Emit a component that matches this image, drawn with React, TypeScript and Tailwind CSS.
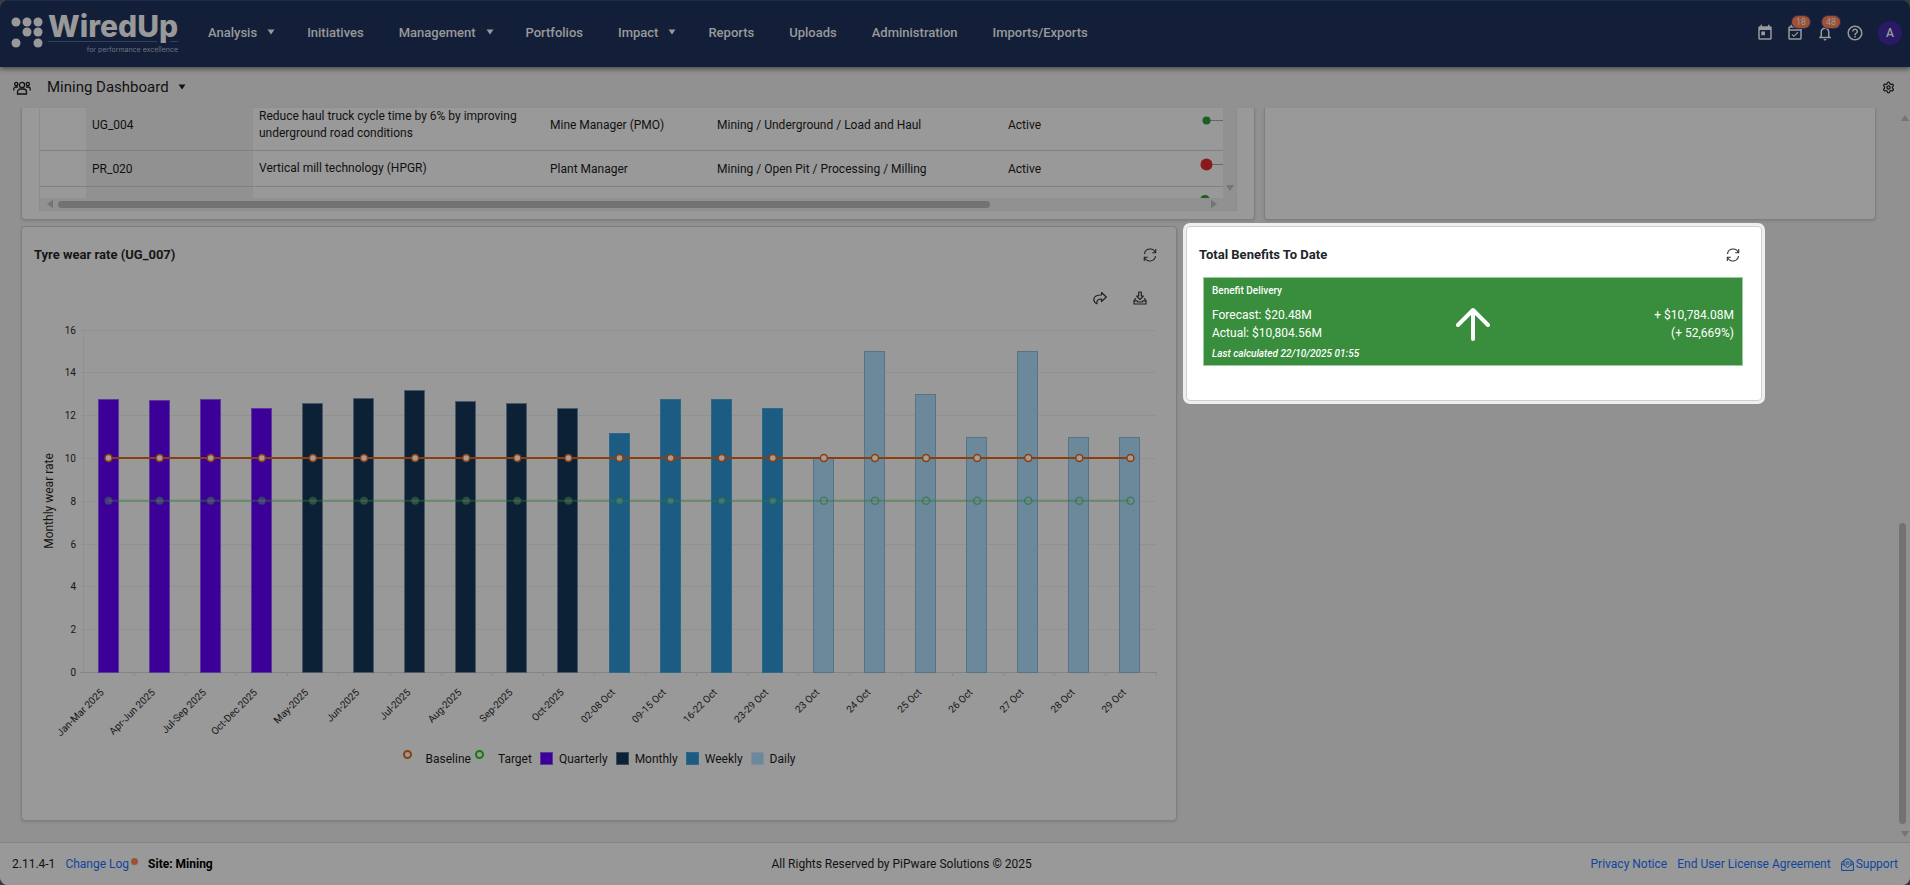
import React from 'react';
import { Settings } from 'lucide-react';
import {
  MdToday, MdOutlineEventAvailable, MdNotificationsNone, MdHelpOutline
} from 'react-icons/md';

const menuItems = [
  { name: 'Analysis', dropdown: true },
  { name: 'Initiatives' },
  { name: 'Management', dropdown: true },
  { name: 'Portfolios' },
  { name: 'Impact', dropdown: true },
  { name: 'Reports' },
  { name: 'Uploads' },
  { name: 'Administration' },
  { name: 'Imports/Exports' }
];

const initiatives = [
  {
    code: 'UG_004',
    name: 'Reduce haul truck cycle time by 6% by improving underground road conditions',
    owner: 'Mine Manager (PMO)',
    location: 'Mining / Underground / Load and Haul',
    status: 'Active',
    dot: '#1d5e21',
    radius: 4
  },
  {
    code: 'PR_020',
    name: 'Vertical mill technology (HPGR)',
    owner: 'Plant Manager',
    location: 'Mining / Open Pit / Processing / Milling',
    status: 'Active',
    dot: '#8a1a1a',
    radius: 6
  }
];

const series = {
  quarterly: '#3c0099',
  monthly: '#0c2136',
  weekly: '#1c5c82',
  daily: '#6c899c'
};

const borders = {
  quarterly: '#5c3a9a',
  monthly: '#4a5a68',
  weekly: '#2f6788',
  daily: '#567486'
};

type Kind = keyof typeof series;

const wearRates: { label: string; value: number; kind: Kind }[] = [
  { label: 'Jan-Mar 2025', value: 12.78, kind: 'quarterly' },
  { label: 'Apr-Jun 2025', value: 12.7, kind: 'quarterly' },
  { label: 'Jul-Sep 2025', value: 12.78, kind: 'quarterly' },
  { label: 'Oct-Dec 2025', value: 12.35, kind: 'quarterly' },
  { label: 'May-2025', value: 12.58, kind: 'monthly' },
  { label: 'Jun-2025', value: 12.82, kind: 'monthly' },
  { label: 'Jul-2025', value: 13.17, kind: 'monthly' },
  { label: 'Aug-2025', value: 12.66, kind: 'monthly' },
  { label: 'Sep-2025', value: 12.56, kind: 'monthly' },
  { label: 'Oct-2025', value: 12.35, kind: 'monthly' },
  { label: '02-08 Oct', value: 11.18, kind: 'weekly' },
  { label: '09-15 Oct', value: 12.74, kind: 'weekly' },
  { label: '16-22 Oct', value: 12.74, kind: 'weekly' },
  { label: '23-29 Oct', value: 12.32, kind: 'weekly' },
  { label: '23 Oct', value: 10, kind: 'daily' },
  { label: '24 Oct', value: 15, kind: 'daily' },
  { label: '25 Oct', value: 13, kind: 'daily' },
  { label: '26 Oct', value: 11, kind: 'daily' },
  { label: '27 Oct', value: 15, kind: 'daily' },
  { label: '28 Oct', value: 11, kind: 'daily' },
  { label: '29 Oct', value: 11, kind: 'daily' }
];

const Caret = ({ className }: { className: string }) => (
  <svg viewBox="0 0 10 10" className={className} fill="currentColor" aria-hidden="true">
    <path d="M1.5 2.500h7L5 7.500z" />
  </svg>
);

const RefreshIcon = () => (
  <svg viewBox="0 0 14 14" className="size-[14px]" fill="none" stroke="currentColor" strokeWidth="1.1" aria-hidden="true">
    <path d="M1.5 6A5.600 5.600 0 0 1 12.300 4.600M12.500 8A5.600 5.600 0 0 1 1.700 9.400" />
    <path d="M12.700 1v3.800H9.200M1.300 13V9.200h3.500" />
  </svg>
);

const Logo = () => (
  <svg viewBox="0 0 170 44" className="h-[44px] w-[170px] overflow-visible" fill="#999" role="img" aria-label="WiredUp for performance excellence">
    {[[5, 11], [16, 11], [27, 11], [16, 21], [27, 21], [5, 32], [27, 32]].map(([x, y]) => (
      <circle key={`${x}-${y}`} cx={x} cy={y} r="4.500" />
    ))}
    <text x="37" y="26" fontFamily="Inter, sans-serif" fontWeight="800" fontSize="30">WiredUp</text>
    <path d="M37 30.500h109M159 30.500h8" stroke="#33425c" strokeWidth="1" />
    <text x="167" y="41" textAnchor="end" fontFamily="Inter, sans-serif" fontSize="7" fill="#6d7482">for performance excellence</text>
  </svg>
);

const WearRateChart = () => {
  const left = 61;
  const right = 1134;
  const bottom = 359;
  const unit = 21.4;
  const step = (right - left) / wearRates.length;
  const y = (value: number) => bottom - value * unit;
  const x = (index: number) => left + step * (index + 0.5);

  return (
    <svg viewBox="0 0 1154 430" className="w-full" fontFamily="Roboto, sans-serif" role="img" aria-label="Monthly wear rate">
      {[0, 2, 4, 6, 8, 10, 12, 14, 16].map((tick) => (
        <g key={tick}>
          <path d={`M${left - 3} ${Math.round(y(tick)) + 0.5}H${right}`} stroke={tick === 0 ? '#848484' : '#919191'} />
          <text x={left - 7} y={Math.round(y(tick)) + 4} textAnchor="end" fontSize="10" fill="#161616">{tick}</text>
        </g>
      ))}
      <path d={`M${left + 0.5} ${y(16)}V${bottom + 3}`} stroke="#919191" />
      <text transform="translate(31 188) rotate(-90)" textAnchor="middle" fontSize="12" fill="#161616">Monthly wear rate</text>

      {wearRates.map((rate, index) => (
        <g key={`${rate.kind}-${rate.label}`}>
          <rect
            x={Math.round(x(index) - 10) - 0.5}
            y={Math.round(y(rate.value)) + 0.5}
            width="20"
            height={bottom - Math.round(y(rate.value))}
            fill={series[rate.kind]}
            stroke={borders[rate.kind]}
          />
          <path d={`M${Math.round(left + step * (index + 1)) + 0.5} ${bottom}v4`} stroke="#8a8a8a" />
          <text
            transform={`translate(${x(index) - 4} 380) rotate(-45)`}
            textAnchor="end"
            fontSize="10"
            fill="#161616"
          >
            {rate.label}
          </text>
        </g>
      ))}

      {/* Baseline and target */}
      <path d={`M${x(0)} ${y(10)}H${x(20)}`} stroke="#8b3f0f" strokeWidth="2" />
      <path d={`M${x(0)} ${y(8)}H${x(20)}`} stroke="#2f7a35" strokeOpacity="0.45" strokeWidth="2" />
      {wearRates.map((rate, index) => (
        <g key={`marker-${rate.kind}-${rate.label}`}>
          <circle cx={x(index)} cy={y(10)} r="3.500" fill="#a59c96" stroke="#8b3f0f" strokeWidth="1.500" />
          <circle
            cx={x(index)}
            cy={y(8)}
            r="3.500"
            fill="#999"
            fillOpacity={rate.kind === 'daily' ? 0.15 : 0.3}
            stroke="#1b6b28"
            strokeOpacity="0.5"
            strokeWidth="1.500"
          />
        </g>
      ))}
    </svg>
  );
};

const App = () => {
  return (
    <div className="h-screen bg-[#3a3a3c] font-[Roboto,sans-serif] text-xs text-[#111]">
      <div className="flex h-full flex-col overflow-hidden rounded-lg bg-[#919191]">
        {/* Top navigation */}
        <header className="z-10 flex h-[67px] shrink-0 items-center border-t border-[#1c2d4c] bg-[#131f38] pr-2 pb-[3px] pl-[11px] text-[#999] shadow-[0_2px_5px_rgba(0,0,0,0.5)]">
          <Logo />
          <nav className="ml-[27px] flex items-center gap-[35px] text-[13px] font-medium">
            {menuItems.map((item) => (
              <a key={item.name} href="#" className="flex items-center">
                {item.name}
                {item.dropdown && <Caret className="-mr-1 ml-[9px] size-[10px]" />}
              </a>
            ))}
          </nav>
          <div className="ml-auto flex items-center gap-3">
            <button aria-label="Calendar"><MdToday className="size-[18px]" /></button>
            <button aria-label="Tasks" className="relative">
              <MdOutlineEventAvailable className="size-[18px]" />
              <span className="absolute -top-2 left-1.5 h-3 w-[18px] rounded-full bg-[#9e5235] text-center text-[9px] leading-3 ring-1 ring-[#3a2a5a]">18</span>
            </button>
            <button aria-label="Notifications" className="relative">
              <MdNotificationsNone className="size-[18px]" />
              <span className="absolute -top-2 left-1.5 h-3 w-[18px] rounded-full bg-[#9e5235] text-center text-[9px] leading-3 ring-1 ring-[#3a2a5a]">48</span>
            </button>
            <button aria-label="Help"><MdHelpOutline className="size-[18px]" /></button>
            <button className="ml-0.5 size-6 rounded-full bg-[#2a1a66] text-xs font-medium">A</button>
          </div>
        </header>

        {/* Dashboard title bar */}
        <div className="flex h-[41px] shrink-0 items-center pr-[15px] pl-[13px]">
          <svg viewBox="0 0 18 14" className="h-[14px] w-[18px]" fill="none" stroke="currentColor" strokeWidth="1.300" aria-hidden="true">
            <circle cx="9" cy="4" r="2.600" />
            <circle cx="3.200" cy="3" r="1.600" />
            <circle cx="14.800" cy="3" r="1.600" />
            <path d="M4.500 13V11a3 3 0 0 1 3-3h3a3 3 0 0 1 3 3v2zM.8 9.500V8a2 2 0 0 1 2-2H5M17.200 9.500V8a2 2 0 0 0-2-2H13" />
          </svg>
          <button className="ml-4 flex items-center text-[15px]">
            Mining Dashboard
            <Caret className="ml-2 size-[10px]" />
          </button>
          <button aria-label="Settings" className="ml-auto">
            <Settings className="size-[13px]" strokeWidth={2.2} />
          </button>
        </div>

        <main className="flex min-h-0 flex-1">
          <div className="flex min-w-0 flex-1 flex-col gap-1.5 pr-[23px] pl-[21px]">
            <div className="grid grid-cols-[1234fr_612fr] gap-[9px]">
              {/* Initiatives table */}
              <section className="rounded-b border border-t-0 border-[#7f7f7f] bg-[#999] px-[17px] pb-2 shadow-sm">
                <div className="flex border-x border-[#8d8d8d]">
                  <div className="h-[90px] min-w-0 flex-1 overflow-hidden">
                    <table className="-mt-2 w-full table-fixed">
                      <colgroup>
                        <col className="w-[46px]" />
                        <col className="w-[167px]" />
                        <col className="w-[291px]" />
                        <col className="w-[167px]" />
                        <col className="w-[291px]" />
                        <col className="w-[190px]" />
                        <col />
                      </colgroup>
                      <tbody>
                        {initiatives.map((row) => (
                          <tr key={row.code} className="border-b border-[#808080]">
                            <td />
                            <td className="bg-[#919191] px-1.5">{row.code}</td>
                            <td className="px-1.5 py-2 leading-[17px]">{row.name}</td>
                            <td className="px-1.5">{row.owner}</td>
                            <td className="px-1.5">{row.location}</td>
                            <td className="px-1.5">{row.status}</td>
                            <td className="h-9">
                              <svg viewBox="0 0 33 20" className="-mt-2 ml-auto h-5 w-[33px]" aria-hidden="true">
                                <path d="M14 9.500H33" stroke="#5c6e64" />
                                <circle cx="14.500" cy="9.500" r={row.radius} fill={row.dot} />
                              </svg>
                            </td>
                          </tr>
                        ))}
                        <tr>
                          <td />
                          <td className="bg-[#919191]" />
                          <td colSpan={5} className="h-9 align-top">
                            <svg viewBox="0 0 33 20" className="ml-auto h-5 w-[33px]" aria-hidden="true">
                              <circle cx="15" cy="13" r="5" fill="#1d5e21" />
                            </svg>
                          </td>
                        </tr>
                      </tbody>
                    </table>
                  </div>
                  <div className="flex w-[13px] items-end justify-center bg-[#919191] pb-1 text-[#757575]">
                    <Caret className="size-3" />
                  </div>
                </div>
                <div className="flex h-[13px] items-center border border-t-0 border-[#8d8d8d] bg-[#919191] pr-4 pl-1 text-[#757575]">
                  <Caret className="size-3 rotate-90" />
                  <div className="ml-0.5 flex-1">
                    <div className="h-[7px] w-[81%] rounded-full bg-[#727272]" />
                  </div>
                  <Caret className="size-3 -rotate-90" />
                </div>
              </section>
              <section className="rounded-b border border-t-0 border-[#7f7f7f] bg-[#999] shadow-sm" />
            </div>

            <div className="grid grid-cols-[1156fr_576fr_105fr] items-start gap-[9px]">
              {/* Tyre wear rate */}
              <section className="h-[595px] rounded border border-[#7f7f7f] bg-[#999] shadow-sm">
                <div className="flex h-[56px] items-center justify-between pr-[19px] pl-3">
                  <h2 className="text-[13px] font-bold text-[#161616]">Tyre wear rate (UG_007)</h2>
                  <button aria-label="Refresh" className="text-[#222]"><RefreshIcon /></button>
                </div>
                <div className="flex h-[30px] items-center justify-end gap-[26px] pr-[29px] text-[#222]">
                  <button aria-label="Share">
                    <svg viewBox="0 0 14 14" className="size-[14px]" fill="none" stroke="currentColor" strokeWidth="1.200" strokeLinejoin="round" aria-hidden="true">
                      <path d="M8.500 1.500 13.300 6 8.500 10.500V8C5 8 3.500 9.500 4 12.800 2 12 .8 10.500.8 8.600.8 5.500 4 4 8.500 4z" />
                    </svg>
                  </button>
                  <button aria-label="Download">
                    <svg viewBox="0 0 14 14" className="size-[14px]" fill="none" stroke="currentColor" strokeWidth="1.200" strokeLinejoin="round" aria-hidden="true">
                      <path d="M5.700 1h2.600v4h2L7 8.700 3.700 5h2zM3 7 1 9.500V13h12V9.500L11 7M1 9.800h3l1 1.200h4l1-1.200h3" />
                    </svg>
                  </button>
                </div>
                <WearRateChart />
                <ul className="mt-[7px] flex items-center justify-center">
                  <li className="flex items-center">
                    <span className="mr-[14px] mb-2 size-[9px] rounded-full border-2 border-[#8b3f0f]" />
                    Baseline
                  </li>
                  <li className="ml-1 flex items-center">
                    <span className="mr-[14px] mb-2 size-[9px] rounded-full border-2 border-[#157a12]" />
                    Target
                  </li>
                  <li className="ml-2 flex items-center gap-[6px]"><span className="size-[13px] border border-[#5c3a9a] bg-[#3c0099]" />Quarterly</li>
                  <li className="ml-2 flex items-center gap-[6px]"><span className="size-[13px] border border-[#3a4a58] bg-[#0c2136]" />Monthly</li>
                  <li className="ml-2 flex items-center gap-[6px]"><span className="size-[13px] border border-[#2f6788] bg-[#1c5c82]" />Weekly</li>
                  <li className="ml-2 flex items-center gap-[6px]"><span className="size-[13px] border border-[#7b909e] bg-[#6c899c]" />Daily</li>
                </ul>
              </section>

              {/* Total benefits, spotlighted */}
              <section className="h-[175px] rounded border border-[#cfcfcf] bg-white ring-3 ring-[#efefef]">
                <div className="flex h-[56px] items-center justify-between pr-[21px] pl-3">
                  <h2 className="text-[13px] font-bold text-[#212529]">Total Benefits To Date</h2>
                  <button aria-label="Refresh" className="text-[#333]"><RefreshIcon /></button>
                </div>
                <div className="-mt-[6px] mr-[18px] ml-4 h-[89px] border border-[#9fcaa1] bg-[#388e3c] px-2 pt-[5px] font-medium text-white">
                  <div className="text-[10px] leading-[15px]">Benefit Delivery</div>
                  <div className="grid grid-cols-3 items-center pt-2 text-xs leading-[18px] font-normal">
                    <div>
                      <div>Forecast: $20.48M</div>
                      <div>Actual: $10,804.56M</div>
                    </div>
                    <svg viewBox="0 0 34 34" className="size-[34px] justify-self-center" fill="none" stroke="currentColor" strokeWidth="4" aria-hidden="true">
                      <path d="M17 32V3M2 18 17 3l15 15" strokeLinecap="round" strokeLinejoin="round" />
                    </svg>
                    <div className="text-right">
                      <div>+ $10,784.08M</div>
                      <div>(+ 52,669%)</div>
                    </div>
                  </div>
                  <div className="mt-[3px] text-[10px] leading-[18px] italic">Last calculated 22/10/2025 01:55</div>
                </div>
              </section>
            </div>
          </div>

          {/* Page scrollbar */}
          <div className="flex w-[11px] flex-col items-center justify-between pt-1 pb-0.5 text-[#757575]">
            <Caret className="size-3 rotate-180" />
            <div className="flex w-full flex-1 flex-col justify-end pr-1 pb-1">
              <div className="h-[43%] w-[7px] rounded-full bg-[#727272]" />
            </div>
            <Caret className="size-3" />
          </div>
        </main>

        <footer className="flex h-[43px] shrink-0 items-center justify-between border-t border-[#858585] bg-[#999] px-3">
          <div className="flex">
            <span>2.11.4-1</span>
            <a href="#" className="ml-2.5 flex text-[#0f469c]">
              Change Log
              <span className="mt-0.5 ml-0.5 size-[7px] rounded-full bg-[#9e5235]" />
            </a>
            <strong className="ml-2.5 font-bold text-black">Site: Mining</strong>
          </div>
          <span>All Rights Reserved by PiPware Solutions © 2025</span>
          <div className="flex gap-2.5 text-[#0f469c]">
            <a href="#">Privacy Notice</a>
            <a href="#">End User License Agreement</a>
            <a href="#" className="flex items-center gap-0.5">
              <svg viewBox="0 0 13 13" className="size-[13px]" fill="none" stroke="currentColor" strokeWidth="1" strokeLinejoin="round" aria-hidden="true">
                <path d="M3 3H2L.6 5v7.400h11.800V5L11 3h-1M3 7V2.500L5 1h3l2 1.500V7M.6 5.500l5.900 4 5.900-4M4.500 4h4M4.500 6h4" />
              </svg>
              Support
            </a>
          </div>
        </footer>
      </div>
    </div>
  );
};

export default App;
